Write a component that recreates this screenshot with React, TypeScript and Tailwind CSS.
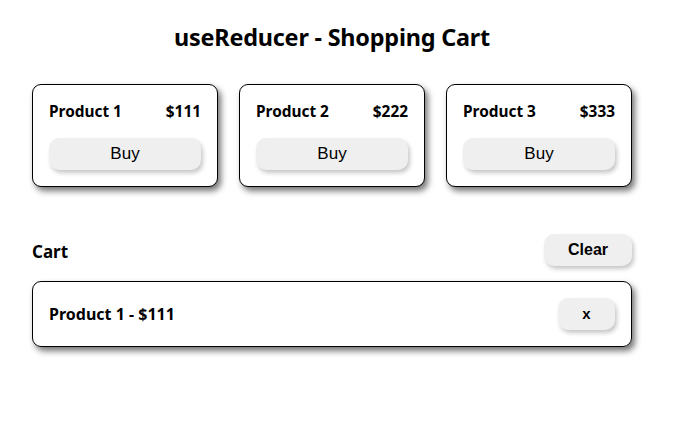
import React from "react";

const products = [
  { name: "Product 1", price: 111 },
  { name: "Product 2", price: 222 },
  { name: "Product 3", price: 333 },
];

const btn =
  "bg-[#efefef] rounded-[10px] h-[32px] shadow-[2px_3px_4px_rgba(0,0,0,0.22)] text-black [font-family:'Liberation_Sans',Arial,sans-serif]";

export default function App() {
  return (
    <div className="min-h-[425px] bg-white text-black [font-family:'Noto_Sans',sans-serif]">
      <div className="w-[600px] ml-[32px] pt-[21px]">
        <h1 className="text-center text-[23.4px] font-bold leading-[32px] tracking-[-0.2px]">
          useReducer - Shopping Cart
        </h1>
        <div className="mt-[31px] flex gap-[21px]">
          {products.map((p) => (
            <div
              key={p.name}
              className="w-[186px] h-[103px] border border-black rounded-[9px] px-[16px] pt-[16px] shadow-[3px_4px_6px_rgba(0,0,0,0.55)] bg-white"
            >
              <div className="flex justify-between items-center text-[15.4px] font-bold leading-[22px]">
                <span>{p.name}</span>
                <span>${p.price}</span>
              </div>
              <button className={`${btn} mt-[15px] w-full text-[17px]`}>
                Buy
              </button>
            </div>
          ))}
        </div>
        <div className="mt-[47px] flex justify-between items-center">
          <h2 className="text-[17px] font-bold leading-[24px] pt-[3px]">Cart</h2>
          <button className={`${btn} w-[88px] text-[16px] font-bold`}>Clear</button>
        </div>
        <div className="mt-[15px] h-[66px] border border-black rounded-[9px] px-[16px] flex items-center justify-between shadow-[3px_4px_6px_rgba(0,0,0,0.55)]">
          <span className="text-[16px] font-bold">Product 1 - $111</span>
          <button className={`${btn} w-[57px] text-[15px] font-bold`}>x</button>
        </div>
      </div>
    </div>
  );
}
